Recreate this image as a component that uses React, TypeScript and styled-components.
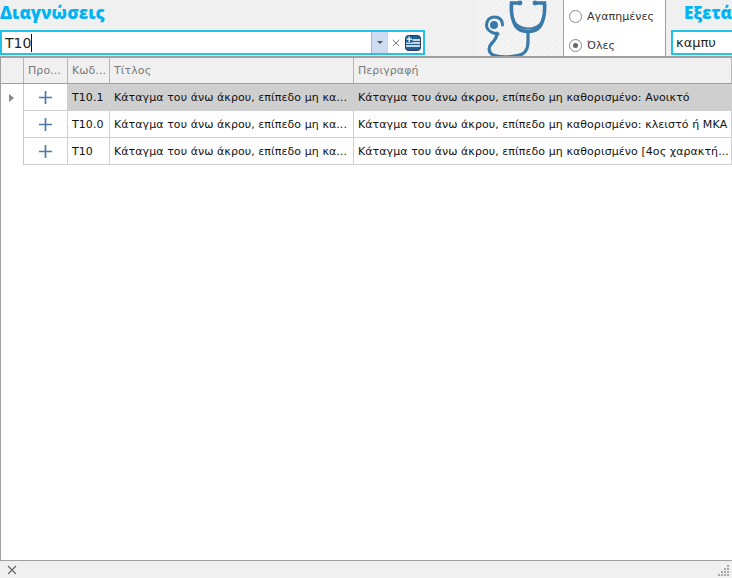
import styled, { createGlobalStyle } from "styled-components";

const GlobalStyle = createGlobalStyle`
  html, body {
    margin: 0;
    padding: 0;
    background: #f0f0f0;
    overflow: hidden;
  }
`;

interface RowData {
  code: string;
  title: string;
  description: string;
}

const rows: RowData[] = [
  {
    code: "T10.1",
    title: "Κάταγμα του άνω άκρου, επίπεδο μη κα...",
    description: "Κάταγμα του άνω άκρου, επίπεδο μη καθορισμένο: Ανοικτό",
  },
  {
    code: "T10.0",
    title: "Κάταγμα του άνω άκρου, επίπεδο μη κα...",
    description: "Κάταγμα του άνω άκρου, επίπεδο μη καθορισμένο: κλειστό ή ΜΚΑ",
  },
  {
    code: "T10",
    title: "Κάταγμα του άνω άκρου, επίπεδο μη κα...",
    description: "Κάταγμα του άνω άκρου, επίπεδο μη καθορισμένο [4ος χαρακτή...",
  },
];

const Page = styled.div`
  width: 732px;
  height: 578px;
  display: flex;
  flex-direction: column;
  overflow: hidden;
  font-family: "DejaVu Sans", "Liberation Sans", sans-serif;
  font-size: 11px;
  letter-spacing: 0.07px;
  color: #111;
`;

const TopBar = styled.div`
  height: 56px;
  display: flex;
  flex-shrink: 0;
  background: #f0f0f0;
`;

const DiagnosisPanel = styled.div`
  width: 425px;
  flex-shrink: 0;
  display: flex;
  flex-direction: column;
  justify-content: space-between;
  padding-bottom: 1px;
  box-sizing: border-box;
`;

const Heading = styled.div`
  font-family: "Open Sans", "Liberation Sans", sans-serif;
  font-weight: 800;
  font-size: 17px;
  line-height: 26px;
  letter-spacing: 0;
  color: #00b4f4;
  white-space: nowrap;
`;

const SearchBox = styled.div`
  height: 25px;
  display: flex;
  align-items: stretch;
  border: 2px solid #20c4ea;
  box-sizing: border-box;
  background: #fff;
`;

const SearchValue = styled.div`
  flex: 1;
  display: flex;
  align-items: center;
  padding-left: 3px;
  font-size: 14px;
  letter-spacing: 0;
  color: #222;
`;

const Caret = styled.span`
  width: 1px;
  height: 18px;
  background: #111;
`;

const DropButton = styled.div`
  width: 15px;
  display: flex;
  align-items: center;
  justify-content: center;
  background: #cddcf3;
  border-left: 1px solid #aab4c4;
  border-right: 1px solid #d5d5d5;
`;

const DropArrow = styled.span`
  width: 0;
  height: 0;
  border-left: 3px solid transparent;
  border-right: 3px solid transparent;
  border-top: 3px solid #555;
`;

const ClearButton = styled.div`
  width: 15px;
  display: flex;
  align-items: center;
  justify-content: center;
`;

const FlagButton = styled.div`
  width: 20px;
  display: flex;
  align-items: center;
  justify-content: center;
`;

const IconPanel = styled.div`
  width: 87px;
  flex-shrink: 0;
  margin-left: 52px;
  display: flex;
  align-items: flex-end;
  box-sizing: border-box;
  padding-left: 3px;
  background: repeating-linear-gradient(135deg, #f0f0f0 0 2px, #f4f4f4 2px 4px);
  border-right: 1px solid #a0a0a0;
`;

const RadioPanel = styled.div`
  width: 102px;
  flex-shrink: 0;
  box-sizing: border-box;
  background: #fff;
  border-right: 1px solid #a0a0a0;
  display: flex;
  flex-direction: column;
  gap: 13px;
  padding: 8px 0 0 5px;
`;

const RadioRow = styled.div`
  display: flex;
  align-items: center;
  gap: 5px;
  height: 16px;
  font-size: 11px;
  color: #333;
  white-space: nowrap;
`;

const RadioCircle = styled.span<{ $checked?: boolean }>`
  width: 13px;
  height: 13px;
  border-radius: 50%;
  border: 1px solid #8a8a8a;
  background: #fff;
  box-sizing: border-box;
  display: flex;
  align-items: center;
  justify-content: center;

  &::after {
    content: "";
    width: 5px;
    height: 5px;
    border-radius: 50%;
    background: ${(props) => (props.$checked ? "#666" : "transparent")};
  }
`;

const ExamPanel = styled.div`
  flex: 1;
  min-width: 0;
  display: flex;
  flex-direction: column;
  justify-content: space-between;
  padding: 0 0 1px 5px;
`;

const ExamHeading = styled(Heading)`
  padding-left: 13px;
`;

const ExamInput = styled.div`
  height: 25px;
  width: 200px;
  border: 2px solid #20c4ea;
  border-right-width: 0;
  box-sizing: border-box;
  background: #fff;
  display: flex;
  align-items: center;
  padding-left: 3px;
  font-size: 13px;
  letter-spacing: 0;
  color: #222;
`;

const Grid = styled.div`
  flex: 1;
  min-height: 0;
  background: #fff;
  border-top: 2px solid #a0a0a0;
  border-left: 1px solid #a0a0a0;
  border-bottom: 1px solid #a0a0a0;
`;

const GridRow = styled.div`
  display: grid;
  grid-template-columns: 23px 44px 42px 244px 378px;
  height: 27px;
`;

const HeaderRow = styled(GridRow)`
  height: 26px;
  background: #f0f0f0;
  border-bottom: 1px solid #a0a0a0;
  box-sizing: border-box;
`;

const HeaderCell = styled.div`
  display: flex;
  align-items: center;
  padding-left: 4px;
  color: #7a7a7a;
  border-right: 1px solid #b5b5b5;
  white-space: nowrap;
  overflow: hidden;
`;

const IndicatorCell = styled.div`
  display: flex;
  align-items: center;
  justify-content: center;
  border-right: 1px solid #c8c8c8;
  background: #fff;
`;

const RowArrow = styled.span`
  width: 0;
  height: 0;
  border-top: 4px solid transparent;
  border-bottom: 4px solid transparent;
  border-left: 5px solid #888;
  margin-right: 1px;
`;

const Cell = styled.div<{ $selected?: boolean }>`
  display: flex;
  align-items: center;
  padding-left: 4px;
  box-sizing: border-box;
  background: ${(props) => (props.$selected ? "#cfcfcf" : "#fff")};
  border-right: 1px solid #d0d0d0;
  border-bottom: 1px solid #d0d0d0;
  white-space: nowrap;
  overflow: hidden;
`;

const AddCell = styled(Cell)`
  justify-content: center;
  padding-left: 0;
`;

const StatusBar = styled.div`
  height: 17px;
  flex-shrink: 0;
  display: flex;
  align-items: center;
  justify-content: space-between;
  background: #f0f0f0;
  padding: 0 2px 0 7px;
`;

const Stethoscope = () => (
  <svg width="72" height="56" viewBox="0 0 72 56" fill="none" stroke="#3a7aa8" strokeLinecap="round">
    <path d="M40 3H31.500C31 10 31.500 16 33.500 21C35.500 28 41 31.500 48 31.500C55 31.500 60.500 28 62.500 21C64.500 16 65 10 64.500 3H55" strokeWidth="3.6" />
    <path d="M34 22C39 27 43 28.500 48 28.500C53 28.500 58 27 62 22" strokeWidth="2" />
    <circle cx="40" cy="3" r="2.400" fill="#3a7aa8" stroke="none" />
    <circle cx="55" cy="3" r="2.400" fill="#3a7aa8" stroke="none" />
    <path d="M48 32V42C48 50 44 55 37 55.500C31 57 20 58 13 55C8 52 8 47 12 43C15 40 17 37 17 33" strokeWidth="3.2" />
    <path d="M18 34C10 33 6.500 29 6.500 25C6.500 20 10 17 14 17C20 17 22.500 20 22.500 25" strokeWidth="3" />
    <circle cx="14" cy="25" r="4" fill="#3a7aa8" stroke="none" />
  </svg>
);

const GreekFlag = () => (
  <svg width="16" height="16" viewBox="0 0 16 16">
    <rect x="0.500" y="0.500" width="15" height="15" rx="3" fill="#1f5f96" stroke="#23384f" />
    <path d="M1 5H15M1 8H15M1 11H15" stroke="#fff" strokeWidth="1.500" />
    <rect x="1" y="1" width="6.500" height="6.500" fill="#1f5f96" />
    <path d="M4.200 1.500V7M1.500 4.200H7" stroke="#fff" strokeWidth="1.300" />
  </svg>
);

const PlusIcon = () => (
  <svg width="15" height="15" viewBox="0 0 15 15">
    <path d="M7.500 1V14M1 7.500H14" stroke="#4a7bab" strokeWidth="1.700" />
  </svg>
);

const CloseMark = ({ size, color }: { size: number; color: string }) => (
  <svg width={size} height={size} viewBox="0 0 10 10">
    <path d="M1 1L9 9M9 1L1 9" stroke={color} strokeWidth="1.200" />
  </svg>
);

const ResizeGrip = () => (
  <svg width="12" height="12" viewBox="0 0 12 12" fill="#a8a8a8">
    <rect x="9" y="1" width="2" height="2" />
    <rect x="6" y="4" width="2" height="2" />
    <rect x="9" y="4" width="2" height="2" />
    <rect x="3" y="7" width="2" height="2" />
    <rect x="6" y="7" width="2" height="2" />
    <rect x="9" y="7" width="2" height="2" />
    <rect x="0" y="10" width="2" height="2" />
    <rect x="3" y="10" width="2" height="2" />
    <rect x="6" y="10" width="2" height="2" />
    <rect x="9" y="10" width="2" height="2" />
  </svg>
);

const App = () => {
  return (
    <Page>
      <GlobalStyle />
      <TopBar>
        <DiagnosisPanel>
          <Heading>Διαγνώσεις</Heading>
          <SearchBox>
            <SearchValue>
              T10
              <Caret />
            </SearchValue>
            <DropButton>
              <DropArrow />
            </DropButton>
            <ClearButton>
              <CloseMark size={8} color="#777" />
            </ClearButton>
            <FlagButton>
              <GreekFlag />
            </FlagButton>
          </SearchBox>
        </DiagnosisPanel>
        <IconPanel>
          <Stethoscope />
        </IconPanel>
        <RadioPanel>
          <RadioRow>
            <RadioCircle />
            Αγαπημένες
          </RadioRow>
          <RadioRow>
            <RadioCircle $checked />
            Όλες
          </RadioRow>
        </RadioPanel>
        <ExamPanel>
          <ExamHeading>Εξετάσεις</ExamHeading>
          <ExamInput>καμπυ</ExamInput>
        </ExamPanel>
      </TopBar>
      <Grid>
        <HeaderRow>
          <HeaderCell />
          <HeaderCell>Προ...</HeaderCell>
          <HeaderCell>Κωδ...</HeaderCell>
          <HeaderCell>Τίτλος</HeaderCell>
          <HeaderCell>Περιγραφή</HeaderCell>
        </HeaderRow>
        {rows.map((row, idx) => (
          <GridRow key={row.code}>
            <IndicatorCell>{idx === 0 && <RowArrow />}</IndicatorCell>
            <AddCell>
              <PlusIcon />
            </AddCell>
            <Cell $selected={idx === 0}>{row.code}</Cell>
            <Cell $selected={idx === 0}>{row.title}</Cell>
            <Cell $selected={idx === 0}>{row.description}</Cell>
          </GridRow>
        ))}
      </Grid>
      <StatusBar>
        <CloseMark size={10} color="#666" />
        <ResizeGrip />
      </StatusBar>
    </Page>
  );
};

export default App;
